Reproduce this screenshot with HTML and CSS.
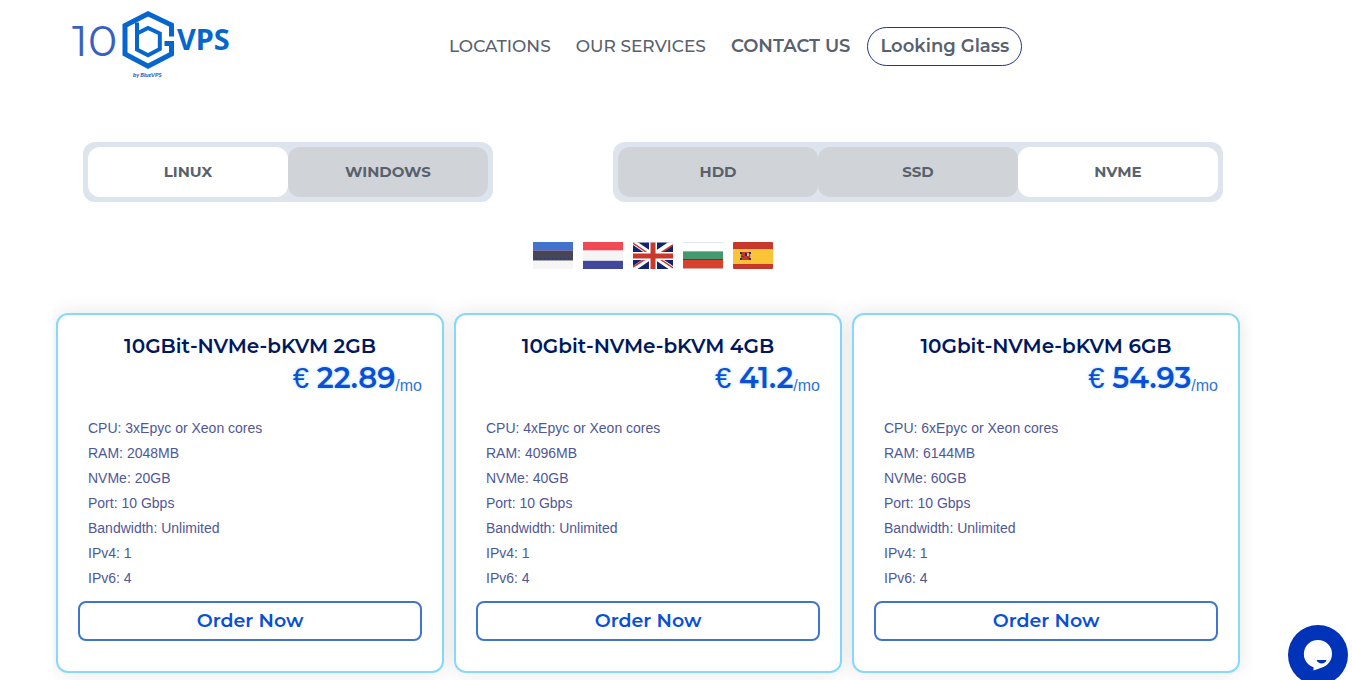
FILE: index.html
```html
<!DOCTYPE html>
<html lang="en">

<head>
    <meta charset="UTF-8">
    <meta name="viewport" content="width=device-width, initial-scale=1.0">
    <title>10GVPS</title>
    <link rel="stylesheet" href="styles.css">
</head>

<body>
    <header class="header">
        <a href="#" class="logo" aria-label="10GVPS by BlueVPS">
            <svg width="160" height="74" viewBox="0 0 160 74">
                <text x="0" y="46" class="logo-ten">10</text>
                <path d="M99.500 26.500V15L76 3.700L53 15.500V44L76 56.200L99.500 44V33.500H92.500" fill="none" stroke="#0566cd" stroke-width="5" />
                <path d="M65 12.500V39.500L76 45.200L87.800 39V23.500L76 18L65 23.500" fill="none" stroke="#0566cd" stroke-width="4" />
                <text x="105" y="40" class="logo-vps">VPS</text>
                <text x="61" y="67" class="logo-by">by BlueVPS</text>
            </svg>
        </a>
        <nav class="nav">
            <a href="#">LOCATIONS</a>
            <a href="#">OUR SERVICES</a>
            <a href="#" class="bold">CONTACT US</a>
            <a href="#" class="bold glass">Looking Glass</a>
        </nav>
    </header>

    <main class="main">
        <div class="filters">
            <div class="switch" role="group" aria-label="Operating system">
                <button type="button" class="tab active" aria-pressed="true">LINUX</button>
                <button type="button" class="tab" aria-pressed="false">WINDOWS</button>
            </div>
            <div class="switch" role="group" aria-label="Disk type">
                <button type="button" class="tab" aria-pressed="false">HDD</button>
                <button type="button" class="tab" aria-pressed="false">SSD</button>
                <button type="button" class="tab active" aria-pressed="true">NVME</button>
            </div>
        </div>

        <div class="flags">
            <a href="#" aria-label="Estonia">
                <svg width="40" height="27" viewBox="0 0 40 27">
                    <rect width="40" height="27" fill="#f5f5f5" />
                    <rect width="40" height="8" fill="#4173cd" />
                    <rect y="8" width="40" height="1" fill="#7a6fae" />
                    <rect y="9" width="40" height="9" fill="#464655" />
                    <rect y="18" width="40" height="1" fill="#a5a5a8" />
                    <path d="M3 16.500H38" stroke="#26357f" stroke-dasharray="1 3" />
                </svg>
            </a>
            <a href="#" aria-label="Netherlands">
                <svg width="40" height="27" viewBox="0 0 40 27">
                    <rect width="40" height="27" fill="#f5f5f5" />
                    <rect width="40" height="8" fill="#ef4a55" />
                    <rect y="8" width="40" height="1" fill="#f6c3c7" />
                    <rect y="18" width="40" height="1" fill="#d3d4e4" />
                    <rect y="19" width="40" height="8" fill="#41479b" />
                </svg>
            </a>
            <a href="#" aria-label="United Kingdom">
                <svg width="40" height="27" viewBox="0 0 40 27">
                    <rect width="40" height="27" fill="#11246d" />
                    <path d="M0 0L40 27M40 0L0 27" stroke="#fff" stroke-width="5" />
                    <path d="M0 1L16 12M24 15L40 26M40 3L26 12M14 16L0 25" stroke="#c9382b" stroke-width="1.500" />
                    <path d="M20 0V27M0 14H40" stroke="#fff" stroke-width="8" />
                    <path d="M20 0V27M0 14H40" stroke="#c9382b" stroke-width="5" />
                    <path d="M0 0.500H40" stroke="#d5d9e8" opacity="0.6" />
                </svg>
            </a>
            <a href="#" aria-label="Bulgaria">
                <svg width="40" height="27" viewBox="0 0 40 27">
                    <rect width="40" height="27" fill="#fff" />
                    <rect width="40" height="1" fill="#dbe7e9" />
                    <rect y="9" width="40" height="1" fill="#9faaa9" />
                    <rect y="10" width="40" height="7" fill="#44996e" />
                    <rect y="17" width="40" height="1" fill="#46463c" />
                    <rect y="18" width="40" height="8" fill="#d8412b" />
                    <rect y="26" width="40" height="1" fill="#dfa79e" />
                </svg>
            </a>
            <a href="#" aria-label="Spain">
                <svg width="40" height="27" viewBox="0 0 40 27">
                    <rect width="40" height="27" rx="1" fill="#c8382a" />
                    <rect y="7" width="40" height="15" fill="#fbc436" />
                    <rect x="7" y="10" width="11" height="8" fill="#bd3b2d" />
                    <path d="M7 10H9V12H7ZM16 10H18V12H16ZM12 11H14V14H12ZM7 16H9V18H7ZM16 16H18V18H16Z" fill="#2b2f72" />
                    <path d="M7 12H8V16H7ZM17 12H18V16H17Z" fill="#e0b04a" />
                    <path d="M14 11H16V14H14Z" fill="#c7b7bd" />
                    <path d="M8 14.500H11M14 16H16" stroke="#7b3030" />
                </svg>
            </a>
        </div>

        <div class="plans">
            <section class="card">
                <h2 class="name">10GBit-NVMe-bKVM 2GB</h2>
                <p class="price"><span class="euro">€</span> 22.89<span class="mo">/mo</span></p>
                <ul class="specs">
                    <li>CPU: 3xEpyc or Xeon cores</li>
                    <li>RAM: 2048MB</li>
                    <li>NVMe: 20GB</li>
                    <li>Port: 10 Gbps</li>
                    <li>Bandwidth: Unlimited</li>
                    <li>IPv4: 1</li>
                    <li>IPv6: 4</li>
                </ul>
                <a href="#" class="order">Order Now</a>
            </section>
            <section class="card">
                <h2 class="name">10Gbit-NVMe-bKVM 4GB</h2>
                <p class="price"><span class="euro">€</span> 41.2<span class="mo">/mo</span></p>
                <ul class="specs">
                    <li>CPU: 4xEpyc or Xeon cores</li>
                    <li>RAM: 4096MB</li>
                    <li>NVMe: 40GB</li>
                    <li>Port: 10 Gbps</li>
                    <li>Bandwidth: Unlimited</li>
                    <li>IPv4: 1</li>
                    <li>IPv6: 4</li>
                </ul>
                <a href="#" class="order">Order Now</a>
            </section>
            <section class="card">
                <h2 class="name">10Gbit-NVMe-bKVM 6GB</h2>
                <p class="price"><span class="euro">€</span> 54.93<span class="mo">/mo</span></p>
                <ul class="specs">
                    <li>CPU: 6xEpyc or Xeon cores</li>
                    <li>RAM: 6144MB</li>
                    <li>NVMe: 60GB</li>
                    <li>Port: 10 Gbps</li>
                    <li>Bandwidth: Unlimited</li>
                    <li>IPv4: 1</li>
                    <li>IPv6: 4</li>
                </ul>
                <a href="#" class="order">Order Now</a>
            </section>
        </div>
    </main>

    <button type="button" class="chat" aria-label="Open chat">
        <svg width="60" height="60" viewBox="0 0 60 60">
            <path d="M30 15a14 14 0 0 0-4.500 27.300V45.500L34 42.500C39 41 44 36 44 29A14 14 0 0 0 30 15Z" fill="#fff" />
            <path d="M28.500 35H38.500C37.500 39.500 30 39.500 28.500 35Z" fill="#0033b8" />
        </svg>
    </button>
</body>

</html>
```
FILE: styles.css
```css
* {
    box-sizing: border-box;
}

body {
    margin: 0;
    background-color: #fff;
    font-family: "Liberation Sans", Arial, sans-serif;
}

a {
    text-decoration: none;
}

.header {
    display: flex;
    align-items: center;
    height: 93px;
    padding: 0 72px;
}

.logo {
    display: flex;
    margin-right: 217px;
}

.logo svg {
    overflow: visible;
}

.logo-ten {
    font: 400 44px Montserrat, Lato, sans-serif;
    fill: #3a5fc4;
}

.logo-vps {
    font: 700 29px "Noto Sans", sans-serif;
    fill: #0566cd;
}

.logo-by {
    font: italic 700 6px Lato, sans-serif;
    fill: #0b53bd;
}

.nav {
    display: flex;
    align-items: center;
    gap: 25px;
}

.nav a {
    color: #58616d;
    font: 500 17px/21px Montserrat, Inter, sans-serif;
}

.nav .bold {
    font-weight: 600;
    font-size: 18px;
}

.nav .glass {
    margin-left: -8px;
    padding: 8px 12px;
    border: 1px solid #27347f;
    border-radius: 20px;
}

.main {
    padding: 49px 99px 0 53px;
    overflow: hidden;
}

.filters {
    display: flex;
    justify-content: space-between;
    padding: 0 30px;
}

.switch {
    display: flex;
    padding: 5px;
    border-radius: 12px;
    background-color: #dde4ed;
}

.tab {
    width: 200px;
    height: 50px;
    padding: 0 0 2px;
    border: none;
    border-radius: 12px;
    background-color: #d0d4d8;
    color: #58616d;
    font: 700 15px Montserrat, Inter, sans-serif;
}

.tab.active {
    background-color: #fff;
}

.flags {
    display: flex;
    justify-content: center;
    gap: 10px;
    padding: 40px 0 0;
}

.flags a {
    display: flex;
}

.plans {
    display: grid;
    grid-template-columns: repeat(3, 1fr);
    gap: 10px;
    padding: 44px 13px 20px 3px;
    overflow: hidden;
}

.card {
    padding: 20px 20px 30px;
    border: 2px solid #87d8fb;
    border-radius: 12px;
    background-color: #fff;
    box-shadow: 0 0 20px rgba(0, 0, 0, 0.1);
}

.name {
    margin: 0;
    color: #001860;
    font: 600 20px/22px Montserrat, Inter, sans-serif;
    text-align: center;
}

.price {
    margin: 0 0 17px;
    color: #0b4fd6;
    font: 600 29px/42px Montserrat, Inter, sans-serif;
    text-align: right;
    text-shadow: 0 0 3px #9fdcff;
}

.euro {
    font: 400 29px/36px "Liberation Sans", Arial, sans-serif;
}

.mo {
    color: #3273d3;
    font: 400 16px/16px "Liberation Sans", Arial, sans-serif;
    vertical-align: -3px;
    text-shadow: none;
}

.specs {
    margin: 0;
    padding: 0 0 10px 10px;
    list-style: none;
    color: #4f5796;
    font-size: 14px;
    line-height: 25px;
}

.order {
    display: block;
    border: 2px solid #3f74cf;
    border-radius: 8px;
    color: #0b4fd6;
    font: 600 19px/36px Montserrat, Inter, sans-serif;
    text-align: center;
}

/* chat bubble, partly below the window edge */
.chat {
    position: fixed;
    right: 4px;
    bottom: -5px;
    display: flex;
    padding: 0;
    border: none;
    border-radius: 50%;
    background-color: #0033b8;
}
```
